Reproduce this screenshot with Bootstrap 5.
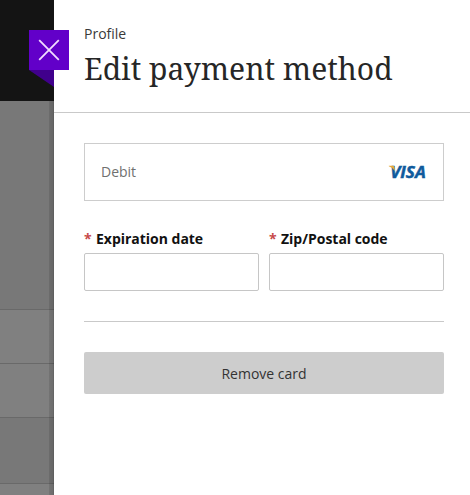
<!DOCTYPE html>
<html lang="en">
<head>
<meta charset="utf-8">
<meta name="viewport" content="width=device-width, initial-scale=1">
<title>Edit payment method</title>
<link href="https://cdn.jsdelivr.net/npm/bootstrap@5.3.0/dist/css/bootstrap.min.css" rel="stylesheet">
<style>
body{font-family:"Open Sans","Noto Sans",sans-serif;font-size:14px;line-height:20px;color:#3a3a3a;background:#fff}
.backdrop-strip{width:54px;background:#808080}
.strip-top{height:101px;background:#141414}
.strip-row{border-bottom:1px solid #696969}
.strip-dark{background:#787878}
.edge-shadow{top:101px;right:0;bottom:0;width:5px;background:linear-gradient(90deg,rgba(0,0,0,.1),rgba(0,0,0,.15) 80%,rgba(0,0,0,.27))}
.h-first{height:209px}.h-mid{height:54px}.h-last{height:66px}
.close-tab{left:29px;top:30px;width:40px;height:40px;background:#6200c9;z-index:2}
.close-fold{left:29px;top:70px;width:25px;height:17px;background:#40008c;clip-path:polygon(0 0,100% 0,100% 100%)}
.panel-head{height:113px;padding:24px 30px 0;border-bottom:1px solid #c9c9c9}
.panel-title{font-family:"Noto Serif","Droid Serif","DejaVu Serif Condensed","DejaVu Serif",serif;font-size:30px;line-height:40px;font-weight:400;color:#262626;margin:5px 0 0;white-space:nowrap}
.panel-body{padding:30px 26px 0 30px}
.method-box{height:58px;padding:0 15px 0 16px;border:1px solid #cdcdcd;color:#707070}
.field-grid{margin-top:28px;gap:10px}
.field-label{font-weight:700;color:#111;margin-bottom:4px;white-space:nowrap;letter-spacing:-.02px}
.required-star{color:#c74a4a;margin-right:.8px}
.field-input{height:38px;border:1px solid #c6c6c6;border-radius:2px}
.divider{height:1px;background:#c9c9c9;margin:30px 0}
.remove-btn,.remove-btn:hover{height:42px;padding:2px 0 0;background:#cdcdcd;color:#333;border:0;border-radius:2px;font-size:14px;line-height:20px}
</style>
<script src="https://cdn.jsdelivr.net/npm/bootstrap@5.3.0/dist/js/bootstrap.bundle.min.js"></script>
</head>
<body>
<div class="d-flex vh-100 overflow-hidden position-relative">
  <div class="backdrop-strip flex-shrink-0 position-relative" aria-hidden="true">
    <div class="strip-top"></div>
    <div class="strip-row strip-dark h-first"></div>
    <div class="strip-row h-mid"></div>
    <div class="strip-row h-mid"></div>
    <div class="strip-row strip-dark h-last"></div>
    <div class="edge-shadow position-absolute"></div>
  </div>
  <button type="button" class="close-tab btn border-0 rounded-0 p-0 position-absolute d-flex align-items-center justify-content-center" aria-label="Close">
    <svg width="22" height="22" viewBox="0 0 22 22" fill="none" stroke="#f1dcff" stroke-width="1.8"><path d="M1.2 1.2 20.8 20.8M20.8 1.2 1.2 20.8"/></svg>
  </button>
  <div class="close-fold position-absolute"></div>
  <main class="flex-grow-1 bg-white">
    <header class="panel-head">
      <div>Profile</div>
      <h1 class="panel-title">Edit payment method</h1>
    </header>
    <form class="panel-body">
      <div class="method-box d-flex align-items-center justify-content-between">
        <span>Debit</span>
        <svg width="40" height="24" viewBox="0 -5 40 24" role="img" aria-label="Visa">
          <text x="2.2" y="12.6" textLength="35.6" lengthAdjust="spacingAndGlyphs" font-family="Open Sans" font-size="16.5" font-weight="700" font-style="italic" fill="#0f5a9c" stroke="#0f5a9c" stroke-width=".5">VISA</text>
          <path d="M0.8 .7h4q1.3 0 1.6 1.4L6.9 6Q4.5 2.3 .8 1.3Z" fill="#e5aa3c"/>
        </svg>
      </div>
      <div class="field-grid d-flex">
        <div class="flex-fill w-50">
          <label class="field-label d-block" for="exp"><span class="required-star">*</span> Expiration date</label>
          <input id="exp" class="field-input form-control" type="text">
        </div>
        <div class="flex-fill w-50">
          <label class="field-label d-block" for="zip"><span class="required-star">*</span> Zip/Postal code</label>
          <input id="zip" class="field-input form-control" type="text">
        </div>
      </div>
      <div class="divider"></div>
      <button type="button" class="remove-btn btn w-100">Remove card</button>
    </form>
  </main>
</div>
</body>
</html>
